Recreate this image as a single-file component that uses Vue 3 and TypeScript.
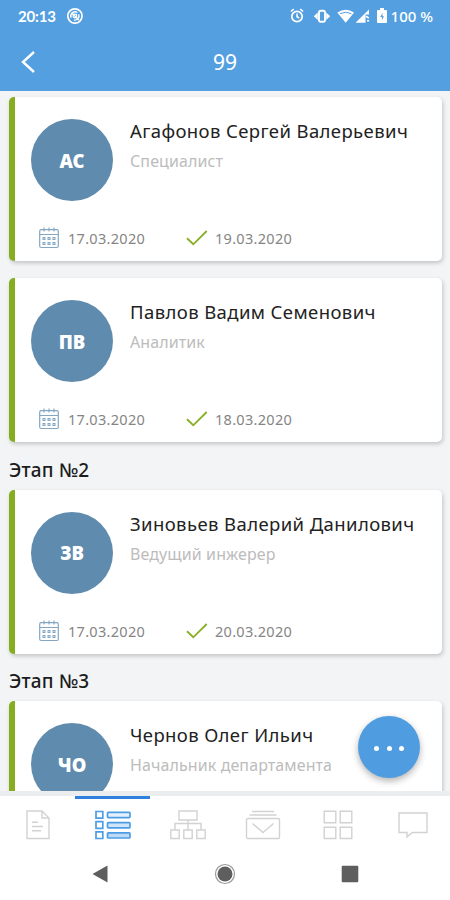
<script setup lang="ts">
interface Person {
  initials: string
  name: string
  role: string
  dates?: { start: string; end: string }
}
interface Stage {
  title?: string
  people: Person[]
}

const stages: Stage[] = [
  {
    people: [
      { initials: 'АС', name: 'Агафонов Сергей Валерьевич', role: 'Специалист', dates: { start: '17.03.2020', end: '19.03.2020' } },
      { initials: 'ПВ', name: 'Павлов Вадим Семенович', role: 'Аналитик', dates: { start: '17.03.2020', end: '18.03.2020' } },
    ],
  },
  {
    title: 'Этап №2',
    people: [
      { initials: 'ЗВ', name: 'Зиновьев Валерий Данилович', role: 'Ведущий инжерер', dates: { start: '17.03.2020', end: '20.03.2020' } },
    ],
  },
  {
    title: 'Этап №3',
    people: [{ initials: 'ЧО', name: 'Чернов Олег Ильич', role: 'Начальник департамента' }],
  },
]
</script>

<template>
  <div class="screen">
    <header class="top">
      <div class="status">
        <span class="clock">20:13</span>
        <svg class="app-ico" width="18" height="18" viewBox="0 0 18 18" fill="none" stroke="#fff">
          <circle cx="9" cy="9" r="7.2" stroke-width="1.7" />
          <path d="M5.2 10.8A4.3 4.3 0 0 1 11.5 5.500M12.800 7.300A4.300 4.300 0 0 1 8 13.100M5.500 5.500l7.300 7.500" stroke-width="1.400" />
          <circle cx="9" cy="9" r="1.900" stroke-width="1.200" />
        </svg>
        <svg class="sys-ico" width="92" height="18" viewBox="0 0 92 18" fill="none" stroke="#fff">
          <circle cx="8" cy="9.500" r="5.200" stroke-width="1.700" />
          <path d="M1.800 4.500l3-2.400M14.200 4.500l-3-2.400M8 6.500v3.200l2.200 1.300" stroke-width="1.500" />
          <rect x="30" y="3.800" width="6" height="11" rx="1.800" stroke-width="1.900" />
          <path d="M28.800 5.500v7.600L24.800 9.300zM37.200 5.500v7.600l4-3.800z" fill="#fff" stroke="none" />
          <path d="M48.300 5.500q8.400-5.600 16.800 0L56.700 15.800z" fill="#fff" stroke="none" />
          <path d="M51 6.700q5.700-3 11.400 0" stroke="#549fe0" stroke-width="1" />
          <path d="M66.500 15.800L80 2.500v5h-3.500v8.300z" fill="#fff" stroke="none" />
          <path d="M76.800 9.300l3 1.700M78 13.800h2.200" stroke-width="1.600" />
        </svg>
        <svg class="battery" width="10" height="16" viewBox="0 0 10 16">
          <path d="M3 0h4v2h2q1 0 1 1v11q0 1-1 1H1q-1 0-1-1V3q0-1 1-1h2z" fill="#fff" />
          <path d="M5.500 5L3.200 9h1.700v3.200L7 8.200H5.500z" fill="#549fe0" />
        </svg>
        <span class="percent">100 %</span>
      </div>
      <div class="bar">
        <svg class="back" width="16" height="24" viewBox="0 0 16 24" fill="none" stroke="#fff" stroke-width="2.400">
          <path d="M14 2L3 12l11 10" />
        </svg>
        <h1>99</h1>
      </div>
    </header>

    <main class="list">
      <section v-for="(stage, i) in stages" :key="i">
        <h2 v-if="stage.title">{{ stage.title }}</h2>
        <article v-for="p in stage.people" :key="p.name" class="card">
          <div class="person">
            <div class="avatar">{{ p.initials }}</div>
            <div class="about">
              <div class="name">{{ p.name }}</div>
              <div class="role">{{ p.role }}</div>
            </div>
          </div>
          <div v-if="p.dates" class="dates">
            <svg width="20" height="22" viewBox="0 0 20 22" fill="none" stroke="#83a6c2">
              <rect x=".7" y="2.700" width="18.600" height="17.800" rx="1.500" stroke-width="1.200" />
              <path d="M1 7.500h18M5 .5v4M10 .5v4M15 .5v4" stroke-width="1.100" />
              <path d="M3.500 11.500h13M3.500 16.500h13" stroke-width="3" stroke-dasharray="3 2" />
              <path d="M3.500 11.500h13M3.500 16.500h13" stroke="#edf4f8" stroke-width="1" stroke-dasharray="1 4" stroke-dashoffset="-1" />
            </svg>
            <span class="start">{{ p.dates.start }}</span>
            <svg class="check" width="22" height="16" viewBox="0 0 22 16" fill="none" stroke="#8aae28" stroke-width="1.900">
              <path d="M1 8.300l6.300 6L20.700 1" />
            </svg>
            <span>{{ p.dates.end }}</span>
          </div>
        </article>
      </section>
      <button class="fab" aria-label="Меню"><i /><i /><i /></button>
    </main>

    <nav class="tabs">
      <div class="tab">
        <svg width="24" height="30" viewBox="0 0 24 30" fill="none" stroke="#d2d2d2" stroke-width="1.400">
          <path d="M1 1h15l7 7v20.500H1zM16 1v7h7M6 12.200h6M6 16.500h11M6 20.800h9" />
        </svg>
      </div>
      <div class="tab active">
        <svg width="36" height="30" viewBox="0 0 36 30" fill="#fff" stroke="#4d9de5" stroke-width="1.700">
          <path d="M1 1.500h6.800v6.600H1zM1 11.700h6.800v6.600H1zM1 21.900h6.800v6.600H1z" />
          <rect x="12.500" y="2.400" width="22.500" height="5.200" rx=".8" fill="#e4f1fc" />
          <rect x="12.500" y="12.600" width="22.500" height="5.200" rx=".8" fill="#d0e5f8" />
          <rect x="12.500" y="22.800" width="22.500" height="5.200" rx=".8" fill="#bcdaf6" />
        </svg>
      </div>
      <div class="tab">
        <svg width="36" height="30" viewBox="0 0 36 30" fill="none" stroke="#d2d2d2" stroke-width="1.400">
          <path d="M9 1h18v9H9zM18 10v10M5 20v-6.500h26V20M.8 20h8.400v8.500H.8zM13.800 20h8.400v8.500h-8.400zM26.800 20h8.400v8.500h-8.400z" />
        </svg>
      </div>
      <div class="tab">
        <svg width="36" height="30" viewBox="0 0 36 30" fill="none" stroke="#d2d2d2" stroke-width="1.400">
          <rect x="1.500" y="8.500" width="33" height="20" rx="1.300" />
          <path d="M7 1.500h22M4.500 5h27M7.500 13.500L18 22.500l10.500-9" />
        </svg>
      </div>
      <div class="tab">
        <svg width="30" height="30" viewBox="0 0 30 30" fill="none" stroke="#d2d2d2" stroke-width="1.400">
          <path d="M1.200 1.200h11.600v11.600H1.200zM17.200 1.200h11.600v11.600H17.200zM1.200 17.200h11.600v11.300H1.200zM17.200 17.200h11.600v11.300H17.200z" />
        </svg>
      </div>
      <div class="tab">
        <svg width="30" height="30" viewBox="0 0 30 30" fill="none" stroke="#d2d2d2" stroke-width="1.400">
          <path d="M1 3h28v19.500H14.500L9 27v-4.500H1z" />
        </svg>
      </div>
    </nav>

    <footer class="system">
      <svg width="16" height="20" viewBox="0 0 16 20"><path d="M.5 10L15.500 1.500v17z" fill="#5e5e5e" /></svg>
      <svg width="22" height="22" viewBox="0 0 22 22"><circle cx="11" cy="11" r="9.500" fill="#fff" stroke="#999" stroke-width="1.200" /><circle cx="11" cy="11" r="7.500" fill="#5e5e5e" /></svg>
      <svg width="18" height="18" viewBox="0 0 18 18"><rect x=".7" y=".7" width="16.600" height="16.600" rx="1" fill="#5e5e5e" /></svg>
    </footer>
  </div>
</template>

<style>
body {
  margin: 0;
  overflow: hidden;
}
</style>

<style scoped>
* {
  box-sizing: border-box;
}
.screen {
  width: 450px;
  height: 900px;
  display: flex;
  flex-direction: column;
  overflow: hidden;
  background: #f2f4f6;
  font-family: 'Noto Sans', 'Open Sans', sans-serif;
}
.top {
  flex: none;
  height: 91px;
  background: #549fe0;
  color: #fff;
}
.status {
  height: 32px;
  padding: 0 17px 0 18px;
  display: flex;
  align-items: center;
  font-family: Lato, sans-serif;
  font-size: 15px;
  font-weight: 700;
}
.clock {
  width: 38px;
  white-space: nowrap;
  letter-spacing: -0.2px;
}
.app-ico {
  margin-left: 10px;
}
.sys-ico {
  width: 92px;
  margin-left: 205px;
  flex: none;
}
.battery {
  flex: none;
  margin-left: -4px;
}
.percent {
  margin-left: 4px;
  white-space: nowrap;
  font-family: 'Noto Sans', sans-serif;
  font-size: 15px;
  font-weight: 500;
}
.bar {
  height: 59px;
  display: grid;
  grid-template-columns: 50px 1fr 50px;
  align-items: center;
}
.back {
  margin-left: 20px;
}
h1 {
  margin: 0;
  text-align: center;
  font-size: 21px;
  font-weight: 400;
  line-height: 30px;
}
.list {
  position: relative;
  flex: none;
  height: 700px;
  overflow: hidden;
  padding: 6px 8px 0 9px;
}
.card {
  height: 164px;
  margin-bottom: 17px;
  padding: 22px 0 0 16px;
  background: #fff;
  border-left: 6px solid #86ad20;
  border-radius: 5px;
  box-shadow: 1px 2px 4px rgba(0, 0, 0, 0.2);
}
h2 {
  margin: 0;
  height: 31px;
  font-size: 19px;
  font-weight: 500;
  line-height: 23px;
  letter-spacing: 0.15px;
  color: #1c1c1c;
}
.card:last-child {
  margin-bottom: 16.500px;
}
.person {
  display: flex;
  gap: 17px;
}
.avatar {
  flex: none;
  width: 82px;
  height: 82px;
  border-radius: 50%;
  background: #5f8bae;
  color: #fff;
  display: flex;
  align-items: center;
  justify-content: center;
  font-size: 18.500px;
  font-weight: 900;
}
.about {
  white-space: nowrap;
}
.name {
  font-size: 18.5px;
  line-height: 24px;
  letter-spacing: 0.4px;
  color: #222;
}
.role {
  margin-top: 7px;
  font-size: 16px;
  line-height: 22px;
  letter-spacing: 0.1px;
  color: #bcbcbc;
}
.dates {
  margin-top: 15px;
  padding-left: 8px;
  height: 44px;
  display: flex;
  align-items: center;
  font-size: 14.500px;
  letter-spacing: 0.3px;
  color: #858585;
}
.start {
  width: 127px;
  padding-left: 9px;
}
.check {
  margin-right: 7px;
}
.fab {
  position: absolute;
  left: 358px;
  top: 625px;
  width: 62px;
  height: 62px;
  padding: 2px 0 0;
  border: 0;
  border-radius: 50%;
  background: #4f9de0;
  box-shadow: 0 3px 7px rgba(0, 0, 0, 0.3);
  display: flex;
  align-items: center;
  justify-content: center;
  gap: 7.500px;
}
.fab i {
  width: 5px;
  height: 5px;
  border-radius: 50%;
  background: #fff;
}
.tabs {
  flex: none;
  height: 60px;
  border-top: 5px solid #ebedef;
  background: #fff;
  display: grid;
  grid-template-columns: repeat(6, 75px);
}
.tab {
  display: flex;
  justify-content: center;
  align-items: flex-start;
  padding-top: 14px;
}
.active {
  border-top: 3px solid #2f80dc;
  padding-top: 11px;
}
.system {
  flex: none;
  height: 49px;
  background: #fff;
  display: grid;
  grid-template-columns: 124px 1fr 124px;
  align-items: center;
  justify-items: center;
  padding: 0 38px 3px;
}
</style>
